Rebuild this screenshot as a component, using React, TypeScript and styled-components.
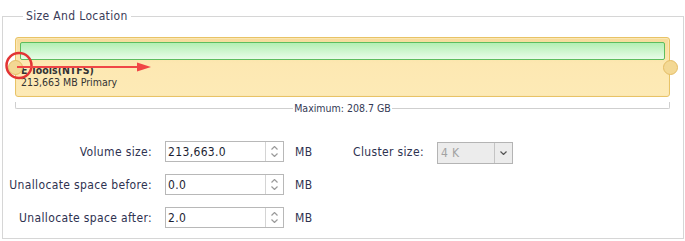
import styled, { createGlobalStyle } from "styled-components";

const GlobalStyle = createGlobalStyle`
  html, body {
    margin: 0;
    padding: 0;
    background: #fff;
  }
  body {
    font-family: "DejaVu Sans Condensed", "DejaVu Sans", sans-serif;
    color: #2e3250;
  }
`;

const Page = styled.div`
  width: 685px;
  height: 241px;
  box-sizing: border-box;
  padding: 9px 0 0 2px;
  overflow: hidden;
`;

const Group = styled.fieldset`
  margin: 0;
  width: 682px;
  height: 230px;
  box-sizing: border-box;
  border: 1px solid #d6d6d6;
  padding: 0 13px 0 12px;
`;

const Legend = styled.legend`
  margin-left: 8px;
  padding: 0 3px;
  font-size: 12px;
  line-height: 14px;
  letter-spacing: 0.35px;
  color: #3a3c58;
`;

const Partition = styled.div`
  position: relative;
  margin-top: 14px;
`;

const Bar = styled.div`
  height: 60px;
  box-sizing: border-box;
  border: 1px solid #e8c366;
  border-radius: 3px;
  padding: 4px;
  background: linear-gradient(#f6db9b, #fde8b2 45%, #fdeab6);
  box-shadow: inset 0 0 0 1px #fbe7b4;
`;

const Used = styled.div`
  height: 18px;
  box-sizing: border-box;
  border: 1px solid #5dbd5d;
  border-radius: 2px;
  background: linear-gradient(#b3efb3, #e8fce8);
`;

const VolumeName = styled.div`
  margin: 4px 0 0 1px;
  font-size: 10.5px;
  line-height: 12px;
  font-weight: bold;
  color: #333;
`;

const VolumeInfo = styled.div`
  margin-left: 1px;
  font-size: 10.5px;
  line-height: 12px;
  color: #333;
`;

const Handle = styled.span<{ $side: "left" | "right" }>`
  position: absolute;
  top: 23px;
  ${(p) => (p.$side === "left" ? "left: -7px;" : "right: -8px;")}
  width: 13px;
  height: 13px;
  border-radius: 50%;
  background: #f3d894;
  border: 1px solid #e4bd66;
`;

const Annotation = styled.svg`
  position: absolute;
  left: -15px;
  top: 0;
  overflow: visible;
`;

const MaxRow = styled.div`
  display: flex;
  align-items: flex-start;
  margin-top: 5px;
`;

const Bracket = styled.div<{ $side: "left" | "right" }>`
  flex: 1;
  height: 6px;
  border-bottom: 1px solid #cfcfcf;
  ${(p) =>
    p.$side === "left"
      ? "border-left: 1px solid #cfcfcf; border-bottom-left-radius: 2px;"
      : "border-right: 1px solid #cfcfcf; border-bottom-right-radius: 2px;"}
`;

const MaxLabel = styled.span`
  margin-top: -1px;
  font-size: 10.5px;
  line-height: 14px;
  padding: 0 1px;
  color: #333a55;
`;

const Form = styled.div`
  display: grid;
  grid-template-columns: 162px 130px 58px 84px 76px;
  grid-auto-rows: 21px;
  row-gap: 12px;
  align-items: center;
  margin: 26px 0 0 -12px;
`;

const Label = styled.label`
  justify-self: end;
  padding-right: 13px;
  font-size: 12px;
  letter-spacing: 0.35px;
  white-space: nowrap;
  color: #2e3250;
`;

const Unit = styled.span`
  font-size: 12px;
  letter-spacing: 0.35px;
  color: #2e3250;
`;

const ClusterLabel = styled.span`
  font-size: 12px;
  letter-spacing: 0.35px;
  color: #2e3250;
`;

const Spin = styled.div`
  display: flex;
  width: 119px;
  height: 21px;
  box-sizing: border-box;
  border: 1px solid #b8b8b8;
  background: #fff;
`;

const SpinInput = styled.input`
  flex: 1;
  min-width: 0;
  border: none;
  outline: none;
  padding: 0 0 0 2px;
  font-family: inherit;
  font-size: 12px;
  letter-spacing: 0.35px;
  color: #1d1f33;
  background: transparent;
`;

const SpinButtons = styled.div`
  width: 17px;
  border-left: 1px solid #d4d4d4;
  display: flex;
  flex-direction: column;
  align-items: center;
  justify-content: center;
  gap: 3px;
`;

const Select = styled.div`
  display: flex;
  width: 76px;
  height: 22px;
  margin-top: 2px;
  box-sizing: border-box;
  border: 1px solid #b4b4b4;
  background: #ececec;
`;

const SelectValue = styled.span`
  flex: 1;
  padding-left: 3px;
  font-size: 12px;
  letter-spacing: 0.35px;
  line-height: 20px;
  color: #a2a2a2;
`;

const SelectButton = styled.span`
  width: 17px;
  border-left: 1px solid #c4c4c4;
  display: flex;
  align-items: center;
  justify-content: center;
`;

function Chevron({ up, color = "#9a9a9a" }: { up?: boolean; color?: string }) {
  return (
    <svg width="7" height="4" viewBox="0 0 7 4">
      <path
        d={up ? "M0.5 3.5 L3.5 0.5 L6.5 3.5" : "M0.5 0.5 L3.5 3.5 L6.5 0.5"}
        fill="none"
        stroke={color}
        strokeWidth="1.2"
      />
    </svg>
  );
}

function SpinBox({ value }: { value: string }) {
  return (
    <Spin>
      <SpinInput defaultValue={value} />
      <SpinButtons>
        <Chevron up />
        <Chevron />
      </SpinButtons>
    </Spin>
  );
}

export default function App() {
  return (
    <Page>
      <GlobalStyle />
      <Group>
        <Legend>Size And Location</Legend>
        <Partition>
          <Bar>
            <Used />
            <VolumeName>E Tools(NTFS)</VolumeName>
            <VolumeInfo>213,663 MB Primary</VolumeInfo>
          </Bar>
          <Handle $side="left" />
          <Handle $side="right" />
          <Annotation width="160" height="60">
            <circle cx="19" cy="28.5" r="12.5" fill="none" stroke="#e23434" strokeWidth="2.5" />
            <line x1="17" y1="30" x2="140" y2="30" stroke="#f04646" strokeWidth="2" />
            <polygon points="137,25.5 151,30 137,34.5" fill="#f04646" />
          </Annotation>
        </Partition>
        <MaxRow>
          <Bracket $side="left" />
          <MaxLabel>Maximum: 208.7 GB</MaxLabel>
          <Bracket $side="right" />
        </MaxRow>
        <Form>
          <Label>Volume size:</Label>
          <SpinBox value="213,663.0" />
          <Unit>MB</Unit>
          <ClusterLabel>Cluster size:</ClusterLabel>
          <Select>
            <SelectValue>4 K</SelectValue>
            <SelectButton>
              <Chevron color="#555" />
            </SelectButton>
          </Select>

          <Label>Unallocate space before:</Label>
          <SpinBox value="0.0" />
          <Unit>MB</Unit>
          <span />
          <span />

          <Label>Unallocate space after:</Label>
          <SpinBox value="2.0" />
          <Unit>MB</Unit>
        </Form>
      </Group>
    </Page>
  );
}
